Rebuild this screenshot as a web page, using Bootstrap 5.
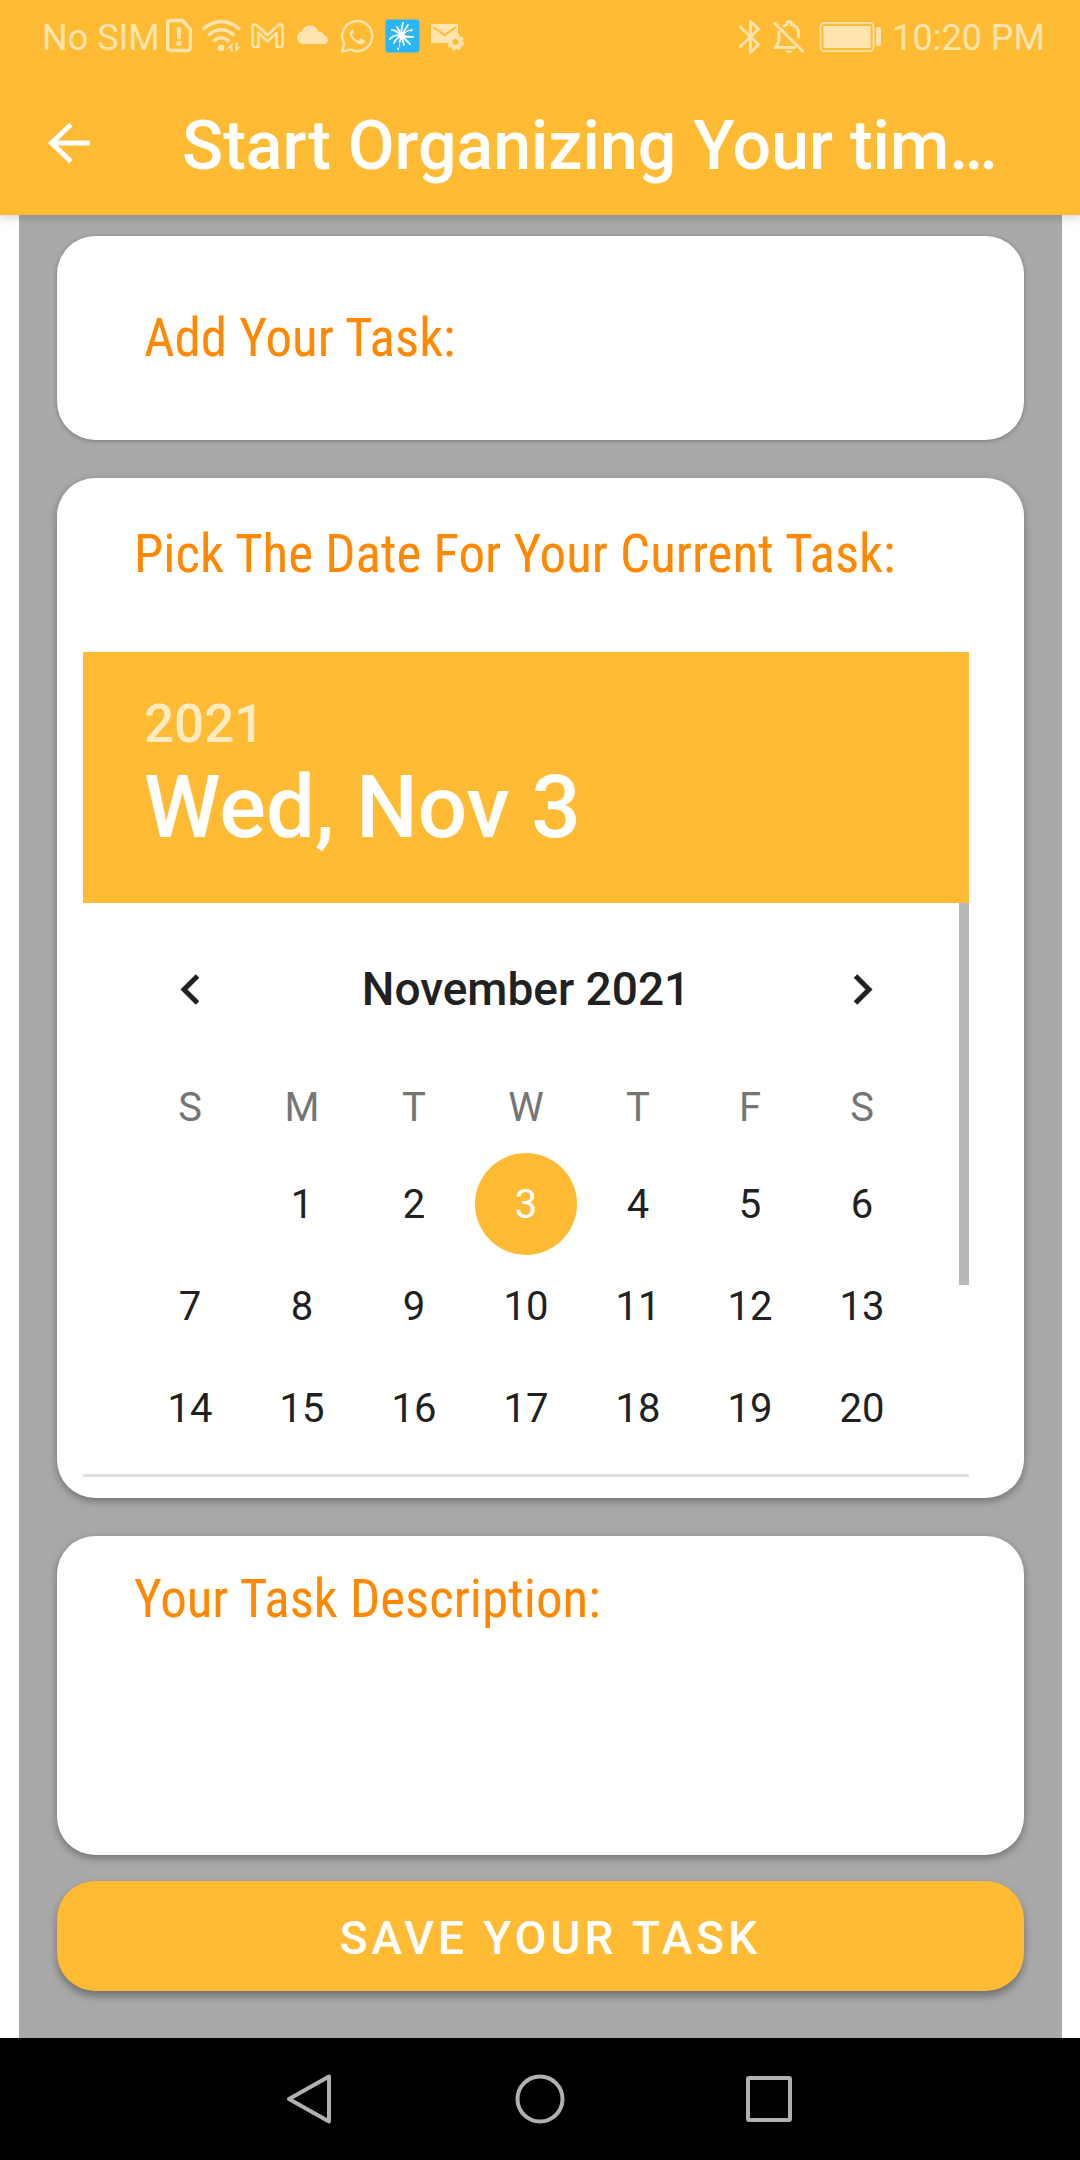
<!DOCTYPE html>
<html lang="en">
<head>
<meta charset="utf-8">
<meta name="viewport" content="width=device-width, initial-scale=1">
<title>Start Organizing</title>
<link href="https://cdn.jsdelivr.net/npm/bootstrap@5.3.0/dist/css/bootstrap.min.css" rel="stylesheet">
<style>
:root { --amber: #ffbb33; --ink: #212121; }
body { font-family: Roboto, "Noto Sans", sans-serif; background: #fff; }
.screen { min-height: 100vh; }
.top-area { background: var(--amber); box-shadow: 0 2px 10px rgba(0,0,0,.2); z-index: 2; }
.status-bar { height: 76px; padding: 0 35px 0 42px; font-size: 36px; line-height: 44px; color: #ffe4b0; }
.status-bar svg { height: 44px; flex: none; }
.status-icons { gap: 10px; }
.sim-text { margin-right: 6px; }
.clock-text { margin-left: 10px; }
.app-bar { height: 139px; padding: 0 42px; }
.app-title { font-size: 68px; line-height: 80px; font-weight: 500; }
.back-btn { width: 56px; height: 56px; margin-right: 84px; }
.form-area { background: #a9a9a9; margin: 0 18px 0 19px; padding: 21px 38px 46px; }
.task-card { border: 0; border-radius: 38px; box-shadow: 0 3px 8px rgba(0,0,0,.35); }
.card-name { padding: 70px 40px 70px 87px; margin-bottom: 38px; box-shadow: 0 1px 5px rgba(0,0,0,.3); }
.card-date { padding: 44px 55px 21px 26px; margin-bottom: 38px; }
.card-desc { padding: 31px 40px 32px 77px; margin-bottom: 26px; }
.field-label { font-family: "Roboto Condensed", Roboto, sans-serif; font-size: 53px; line-height: 64px; color: #ff8800; }
.card-date .field-label { padding-left: 51px; margin-bottom: 66px; }
.field-box { background: transparent; border: 0; font-size: 48px; line-height: 64px; color: var(--ink); padding: 0; resize: none; outline: 0; min-width: 0; }
.name-box { height: 64px; }
.desc-box { height: 192px; }
.picker-head { background: var(--amber); padding: 42px 61px 43px; }
.picker-year { font-size: 53px; line-height: 60px; font-weight: 500; color: rgba(255,255,255,.7); }
.picker-day { font-size: 87px; line-height: 106px; font-weight: 500; }
.picker-body { padding: 50px 51px 15px; border-bottom: 3px solid #e0e0e0; }
.scroll-thumb { width: 10px; height: 382px; background: #b7b7b7; top: 0; right: 0; }
.month-row { height: 72px; margin-bottom: 36px; }
.month-row .btn { width: 112px; height: 72px; }
.month-name { font-size: 46px; line-height: 72px; font-weight: 500; color: var(--ink); }
.month-grid { table-layout: fixed; font-size: 40px; color: var(--ink); }
.month-grid th { height: 92px; font-weight: 400; color: #757575; padding: 2px 0 0; }
.month-grid td { height: 102px; padding: 0; }
.day-btn { width: 102px; height: 102px; font-size: 40px; line-height: 48px; color: inherit; padding: 2px 0 0; border: 0; }
.day-btn.chosen { background: var(--amber); color: #fff; }
.save-btn { background: var(--amber); height: 110px; border: 0; border-radius: 38px; padding: 4px 0 0 20px; font-size: 46px; line-height: 64px; font-weight: 500; letter-spacing: 4px; box-shadow: 0 5px 9px rgba(0,0,0,.35); }
.save-btn:hover { background: var(--amber); }
.nav-keys { height: 122px; gap: 172px; }
.nav-keys .btn { width: 56px; height: 56px; }
</style>
<script src="https://cdn.jsdelivr.net/npm/bootstrap@5.3.0/dist/js/bootstrap.bundle.min.js"></script>
</head>
<body>
<div class="screen d-flex flex-column">
  <header class="top-area position-relative">
    <div class="status-bar d-flex align-items-center justify-content-between">
      <div class="d-flex align-items-center">
        <span class="sim-text">No SIM</span>
        <div class="status-icons d-flex" aria-hidden="true">
          <svg width="26" viewBox="166 16 26 44" fill="none" stroke="#ffe4b0"><path d="M171 20.500h11.500l8 9V47q0 3.500-3.500 3.500h-16q-3.500 0-3.500-3.500V24q0-3.500 3.500-3.500z" stroke-width="3.400"/><path d="M179 28.500v9" stroke-width="4" stroke-linecap="round"/><circle cx="179" cy="43.500" r="2.600" fill="#ffe4b0" stroke="none"/></svg>
          <svg width="39" viewBox="202 16 39 44" fill="none" stroke="#ffe4b0" stroke-width="3.600" stroke-linecap="round"><path d="M203.800 28.500q17.500-14 35 0M209.300 34.500q12-9.500 24 0M214.500 40.500q6.800-5.500 13.500 0"/><circle cx="221" cy="48" r="3.200" fill="#ffe4b0" stroke="none"/><path d="M227 48.500l5.500-6v9.500h-2v-3.500zM241 46.500l-5.500 5.500v-9.500h2v4z" fill="#ffe4b0" stroke="none"/></svg>
          <svg width="35" viewBox="251 16 35 44" fill="none" stroke="#ffe4b0" stroke-width="2.600" stroke-linejoin="round"><path d="M252.500 26.500q0-2 2-2h1.500l11.500 10.500L279 24.500h1.500q2 0 2 2v18q0 2.500-2.500 2.500h-3.500V33l-9 8.500-9-8.500v14h-3.500q-2.500 0-2.500-2.500z"/></svg>
          <svg width="35" viewBox="296 16 35 44" fill="#ffe4b0"><path d="M302.500 44a6.500 6.500 0 0 1-.800-12.600A8.900 8.900 0 0 1 318.500 31.500a6.300 6.300 0 0 1 6 4 4.400 4.400 0 0 1 .200 8.500z"/></svg>
          <svg width="34" viewBox="341 16 34 44" fill="none" stroke="#ffe4b0"><path d="M342.200 51.700l2-8.200A15 15 0 1 1 350.500 49.500z" stroke-width="2.400" stroke-linejoin="round"/><path d="M352.500 29q-4 2.500-2.300 6.500 2.500 5.500 8.500 8.500 5 1.800 6.500-3.500l-4.700-2.300-2.300 2.600q-4.300-1.600-6.300-6l1.800-2.300z" fill="#ffe4b0" stroke="none"/></svg>
          <svg width="35" viewBox="385 16 35 44"><rect x="385.500" y="19.500" width="34" height="33" rx="3" fill="#29b6fb"/><g fill="none" stroke="#fff" stroke-width="1.800" stroke-linecap="round"><path d="M402 36q-6-6-10-6M402 36q-8-2-12 3M402 36q-6 2-8 7M402 36q-3 6-4 13M402 36q1 6 2 9M402 36q4 4 8 8M402 36q6 1 11 1M402 36q5-5 10-6M402 36q3-7 6-11M402 36q-1-8 1-13M402 36q-3-6-5-9"/></g><path d="M399 42l-1 6M405 34l5-3" stroke="#25587c" stroke-width=".8"/><circle cx="402" cy="36" r="3" fill="#fff"/></svg>
          <svg width="35" viewBox="430 16 35 44" fill="#ffe4b0"><path d="M431 24h27v11a9 9 0 0 0-9 8h-18z"/><path d="M433 27l11.500 8L456 27" fill="none" stroke="#ffbb33" stroke-width="2"/><circle cx="455.500" cy="42" r="7" stroke="#ffe4b0" stroke-width="3" stroke-dasharray="3.500 2"/><circle cx="455.500" cy="42" r="3" fill="#ffbb33"/></svg>
        </div>
      </div>
      <div class="d-flex align-items-center">
        <div class="status-icons d-flex" aria-hidden="true">
          <svg width="24" viewBox="738 16 24 44" fill="none" stroke="#ffe4b0" stroke-width="2.800" stroke-linejoin="round" stroke-linecap="round"><path d="M740.500 27l18 17.500-8 8V21.500l8 7.500-18 17.500"/></svg>
          <svg width="34" viewBox="772 16 34 44" fill="none" stroke="#ffe4b0" stroke-width="3" stroke-linecap="round"><path d="M775 23.500L802.500 51M779 32v9l-3.500 6.500h19M784 26q3-1.500 3-1.500 0-3 2-3t2.500 3q7 2 7 9v3.500"/><path d="M785 50.500h7.500q-1 2.500-3.700 2.500t-3.800-2.500z" fill="#ffe4b0" stroke="none"/></svg>
          <svg width="66" viewBox="817 16 66 44" fill="#ffe4b0"><rect x="821.500" y="22.800" width="53" height="28.400" rx="4" fill="none" stroke="#ffe4b0" stroke-width="1.800"/><rect x="824.500" y="26" width="47" height="22"/><rect x="877" y="27" width="5" height="19" rx="2"/></svg>
        </div>
        <span class="clock-text">10:20 PM</span>
      </div>
    </div>
    <div class="app-bar d-flex align-items-center">
      <button type="button" class="back-btn btn p-0 border-0 flex-shrink-0" aria-label="Back"><svg class="d-block" width="56" height="56" viewBox="0 0 56 56" fill="none" stroke="#fff" stroke-width="5"><path d="M48 25H10M29 6.500L9.500 25 29 43.500"/></svg></button>
      <h1 class="app-title text-white text-nowrap mb-0">Start Organizing Your tim…</h1>
    </div>
  </header>

  <main class="form-area flex-grow-1">
    <form>
      <div class="task-card card-name card flex-row align-items-center">
        <label class="field-label text-nowrap flex-shrink-0 me-4" for="task">Add Your Task:</label>
        <input class="field-box name-box flex-grow-1" id="task" type="text">
      </div>

      <section class="task-card card-date card">
        <h2 class="field-label fw-normal mt-0">Pick The Date For Your Current Task:</h2>
        <div class="picker-head">
          <div class="picker-year">2021</div>
          <div class="picker-day text-white">Wed, Nov 3</div>
        </div>
        <div class="picker-body position-relative">
          <div class="scroll-thumb position-absolute"></div>
          <div class="month-row d-flex align-items-center justify-content-between">
            <button type="button" class="btn p-0 border-0" aria-label="Previous month"><svg class="d-block mx-auto" width="36" height="36" viewBox="0 0 36 36" fill="none" stroke="#212121" stroke-width="5"><path d="M25.500 5L12 18.500l13.500 13.500"/></svg></button>
            <div class="month-name">November 2021</div>
            <button type="button" class="btn p-0 border-0" aria-label="Next month"><svg class="d-block mx-auto" width="36" height="36" viewBox="0 0 36 36" fill="none" stroke="#212121" stroke-width="5"><path d="M11.500 5L25 18.500 11.500 32"/></svg></button>
          </div>
          <table class="month-grid w-100 text-center">
            <thead><tr><th>S</th><th>M</th><th>T</th><th>W</th><th>T</th><th>F</th><th>S</th></tr></thead>
            <tbody>
              <tr><td></td><td><button type="button" class="day-btn btn rounded-circle">1</button></td><td><button type="button" class="day-btn btn rounded-circle">2</button></td><td><button type="button" class="day-btn chosen btn rounded-circle" aria-pressed="true">3</button></td><td><button type="button" class="day-btn btn rounded-circle">4</button></td><td><button type="button" class="day-btn btn rounded-circle">5</button></td><td><button type="button" class="day-btn btn rounded-circle">6</button></td></tr>
              <tr><td><button type="button" class="day-btn btn rounded-circle">7</button></td><td><button type="button" class="day-btn btn rounded-circle">8</button></td><td><button type="button" class="day-btn btn rounded-circle">9</button></td><td><button type="button" class="day-btn btn rounded-circle">10</button></td><td><button type="button" class="day-btn btn rounded-circle">11</button></td><td><button type="button" class="day-btn btn rounded-circle">12</button></td><td><button type="button" class="day-btn btn rounded-circle">13</button></td></tr>
              <tr><td><button type="button" class="day-btn btn rounded-circle">14</button></td><td><button type="button" class="day-btn btn rounded-circle">15</button></td><td><button type="button" class="day-btn btn rounded-circle">16</button></td><td><button type="button" class="day-btn btn rounded-circle">17</button></td><td><button type="button" class="day-btn btn rounded-circle">18</button></td><td><button type="button" class="day-btn btn rounded-circle">19</button></td><td><button type="button" class="day-btn btn rounded-circle">20</button></td></tr>
            </tbody>
          </table>
        </div>
      </section>

      <div class="task-card card-desc card">
        <label class="field-label" for="description">Your Task Description:</label>
        <textarea class="field-box desc-box w-100" id="description"></textarea>
      </div>

      <button type="submit" class="save-btn btn w-100 text-white text-uppercase">Save your task</button>
    </form>
  </main>

  <nav class="nav-keys bg-black d-flex align-items-center justify-content-center" aria-label="System">
    <button type="button" class="btn p-0 border-0" aria-label="Back"><svg class="d-block" width="56" height="56" viewBox="0 0 56 56" fill="none" stroke="#b0b0b0" stroke-width="4" stroke-linejoin="round"><path d="M45 5.500v45L5 28z"/></svg></button>
    <button type="button" class="btn p-0 border-0" aria-label="Home"><svg class="d-block" width="56" height="56" viewBox="0 0 56 56" fill="none" stroke="#b0b0b0" stroke-width="4"><circle cx="28" cy="28" r="22.500"/></svg></button>
    <button type="button" class="btn p-0 border-0" aria-label="Recent apps"><svg class="d-block" width="56" height="56" viewBox="0 0 56 56" fill="none" stroke="#b0b0b0" stroke-width="4"><rect x="8" y="7" width="42" height="42" rx="1"/></svg></button>
  </nav>
</div>
</body>
</html>
